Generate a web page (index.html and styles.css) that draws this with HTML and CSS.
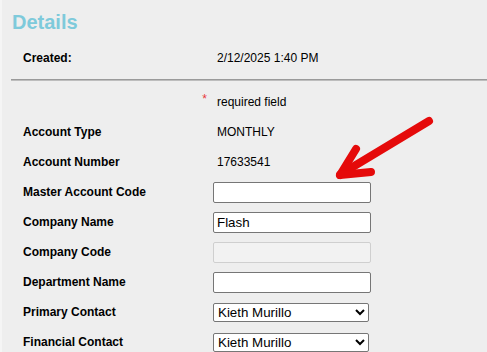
FILE: index.html
```html
<!DOCTYPE html>
<html>
<head>
<meta charset="utf-8">
<link rel="stylesheet" href="styles.css">
</head>
<body>
<div class="page">
  <h2 class="title">Details</h2>
  <div class="row meta">
    <div class="label">Created:</div>
    <div class="value">2/12/2025 1:40 PM</div>
  </div>
  <div class="rule"></div>
  <div class="row req">
    <div class="label"><span class="star">*</span></div>
    <div class="value">required field</div>
  </div>
  <div class="row">
    <div class="label">Account Type</div>
    <div class="value">MONTHLY</div>
  </div>
  <div class="row">
    <div class="label">Account Number</div>
    <div class="value">17633541</div>
  </div>
  <div class="row">
    <div class="label">Master Account Code</div>
    <div class="field"><input class="inp" type="text" value=""></div>
  </div>
  <div class="row">
    <div class="label">Company Name</div>
    <div class="field"><input class="inp" type="text" value="Flash"></div>
  </div>
  <div class="row">
    <div class="label">Company Code</div>
    <div class="field"><input class="inp" type="text" value="" disabled></div>
  </div>
  <div class="row">
    <div class="label">Department Name</div>
    <div class="field"><input class="inp" type="text" value=""></div>
  </div>
  <div class="row">
    <div class="label">Primary Contact</div>
    <div class="field"><select class="sel"><option>Kieth Murillo</option></select></div>
  </div>
  <div class="row">
    <div class="label">Financial Contact</div>
    <div class="field"><select class="sel"><option>Kieth Murillo</option></select></div>
  </div>
  <svg class="arrow" width="487" height="352" viewBox="0 0 487 352">
    <g stroke="#e50a0a" stroke-width="8" stroke-linecap="round" stroke-linejoin="round" fill="none">
      <line x1="429" y1="121" x2="341" y2="174"/>
      <line x1="340" y1="175" x2="356" y2="149"/>
      <line x1="340" y1="175" x2="371" y2="172"/>
    </g>
  </svg>
</div>
</body>
</html>
```
FILE: styles.css
```css
html, body {
  margin: 0;
  padding: 0;
  background: #eeeeee;
}
body {
  font-family: Arial, "Liberation Sans", sans-serif;
  font-size: 12px;
  color: #000;
}
.page {
  position: relative;
  width: 487px;
  height: 352px;
  overflow: hidden;
  box-sizing: border-box;
  border-left: 2px solid #f5f5f5;
}
.title {
  margin: 0 0 9px 0;
  padding: 10px 0 0 10px;
  height: 24px;
  line-height: 24px;
  font-size: 20px;
  font-weight: bold;
  color: #7ecadb;
}
.row {
  display: grid;
  grid-template-columns: 190px 1fr;
  align-items: center;
  height: 30px;
  padding-left: 21px;
}
.label {
  font-weight: bold;
}
.value {
  padding-left: 4px;
}
.req .label {
  text-align: right;
  padding-right: 6px;
}
.star {
  color: #e8383a;
  font-weight: normal;
  font-size: 12px;
  position: relative;
  top: -3px;
}
.rule {
  margin: 6px 0 6px 9px;
  height: 0;
  border-top: 1px solid #9a9a9a;
  border-bottom: 1px solid #bdbdbd;
}
.inp {
  box-sizing: border-box;
  width: 158px;
  height: 21px;
  margin: 0;
  padding: 1px 3px;
  border: 1px solid #767676;
  border-radius: 2px;
  background: #fff;
  font-family: Arial, "Liberation Sans", sans-serif;
  font-size: 13.333px;
  color: #000;
}
.inp:disabled {
  background: #f2f2f2;
  border-color: #cfcfcf;
}
.sel {
  box-sizing: border-box;
  width: 156px;
  height: 19px;
  margin: 0;
  border: 1px solid #767676;
  border-radius: 2px;
  background: #fff;
  font-family: Arial, "Liberation Sans", sans-serif;
  font-size: 13.333px;
  color: #000;
}
.arrow {
  position: absolute;
  left: -2px;
  top: 0;
  pointer-events: none;
}
```
